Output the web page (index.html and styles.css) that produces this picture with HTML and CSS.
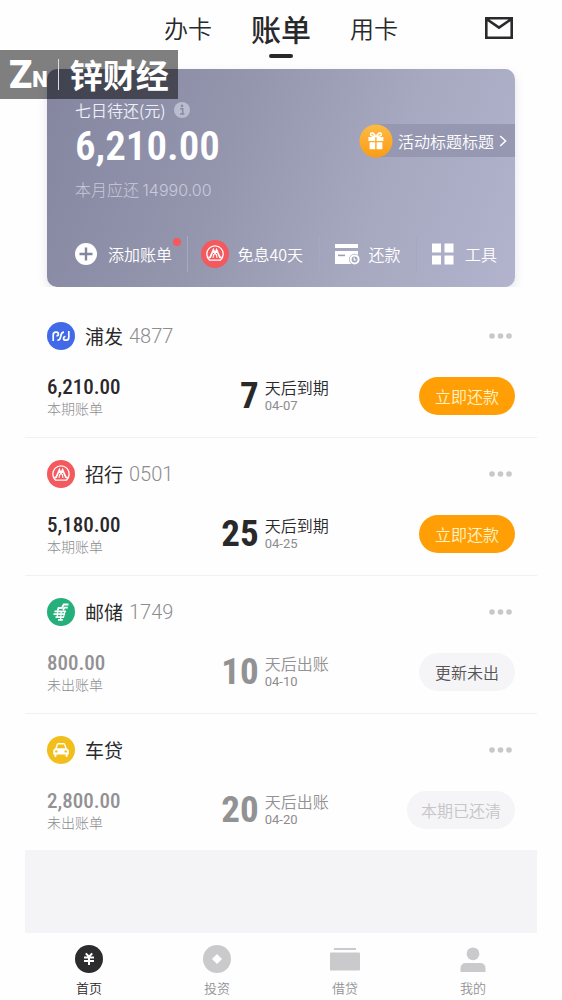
FILE: index.html
```html
<!DOCTYPE html>
<html lang="zh-CN">
<head>
<meta charset="utf-8">
<meta name="viewport" content="width=device-width, initial-scale=1">
<title>账单</title>
<link rel="stylesheet" href="styles.css">
</head>
<body>
<svg class="defs" aria-hidden="true">
  <symbol id="cmb" viewBox="0 0 28 28">
    <circle cx="14" cy="14" r="14" fill="#f4595d"/>
    <path d="M8.6 20.2a8.2 8.2 0 1 1 10.8 0z" fill="none" stroke="#fff" stroke-width="1.3"/>
    <path d="M7.4 17.6l1.8-.4 3.200-7.400 1.600 3.800 1.600-3.800 3.200 7.400 1.800.4" fill="none" stroke="#fff" stroke-width="1.7"/>
    <path d="M12 17.8l.7-3.800M16 17.800l-.7-3.800" fill="none" stroke="#fff" stroke-width="1.1"/>
  </symbol>
  <symbol id="dots" viewBox="0 0 24 6">
    <circle cx="3" cy="3" r="2.8"/><circle cx="11.5" cy="3" r="2.8"/><circle cx="20" cy="3" r="2.8"/>
  </symbol>
</svg>
<div class="watermark"><span class="wm-z">Z</span><span class="wm-n">N</span><span class="wm-line"></span><span class="wm-name">锌财经</span></div>
<div class="app">
  <header class="top">
    <nav class="tabs">
      <a class="tab" href="#cards">办卡</a>
      <a class="tab active" href="#bills">账单</a>
      <a class="tab" href="#use">用卡</a>
    </nav>
    <button class="mail" aria-label="消息">
      <svg width="28" height="22" viewBox="0 0 28 22" fill="none" stroke="#2a2a2c" stroke-width="2.6"><path d="M1.3 1.3h25.4v19.4H1.3zM1.5 2l12.5 8.6L26.5 2"/></svg>
    </button>
  </header>
  <main>
    <section class="card">
      <div class="summary">
        <div>
          <div class="due">七日待还(元)<svg width="16" height="16" viewBox="0 0 16 16"><circle cx="8" cy="8" r="8" fill="#babdce"/><path d="M6.2 6.8h2.5v4.8M6 12h4.4" fill="none" stroke="#888ba4" stroke-width="1.6"/><circle cx="8" cy="3.9" r="1.3" fill="#888ba4"/></svg></div>
          <div class="total">6,210.00</div>
          <div class="month">本月应还 <span>14990.00</span></div>
        </div>
        <a class="promo" href="#promo">
          <svg class="gift" width="34" height="34" viewBox="0 0 34 34"><defs><linearGradient id="g" x1="0" y1="0" x2="0" y2="1"><stop offset="0" stop-color="#fdbb45"/><stop offset="1" stop-color="#fb9c13"/></linearGradient></defs><circle cx="17" cy="17" r="16.5" fill="url(#g)"/><path d="M9.4 13h6.8v4H9.4zM17.6 13h6.8v4h-6.8zM10.6 18.2h5.6v7h-5.6zM17.6 18.2h5.8v7h-5.8z" fill="#fff"/><path d="M16.5 12.5c-4 0-5.4-1.2-4.9-2.6.7-1.8 3.9-.8 4.9 2.6zM17.4 12.5c4 0 5.4-1.2 4.9-2.6-.7-1.8-3.9-.8-4.9 2.6z" fill="none" stroke="#fff" stroke-width="1.5"/></svg>
          <span>活动标题标题</span>
          <svg width="8" height="12" viewBox="0 0 8 12" fill="none" stroke="#fff" stroke-width="1.5"><path d="M1.2 1l5.4 5-5.4 5"/></svg>
        </a>
      </div>
      <div class="tools">
        <button class="tool tool-add"><svg width="22" height="22" viewBox="0 0 22 22"><circle cx="11" cy="11" r="11" fill="#fff"/><path d="M11 4.5v13M4.5 11h13" stroke="#8486a0" stroke-width="2.4"/></svg><span>添加账单</span></button>
        <button class="tool tool-free"><svg width="28" height="28"><use href="#cmb"/></svg><span>免息40天</span></button>
        <button class="tool"><svg width="25" height="21" viewBox="0 0 25 21"><path d="M0 0h23v4H0zM0 7h23v13H0z" fill="#fff"/><path d="M3 11.4h7" stroke="#9c9eb8" stroke-width="1.6"/><circle cx="19.6" cy="15.4" r="5.6" fill="#a3a5be"/><circle cx="19.6" cy="15.4" r="4" fill="none" stroke="#fff" stroke-width="2"/><path d="M19.2 13.6v2.4h2" fill="none" stroke="#fff" stroke-width="1.2"/></svg><span>还款</span></button>
        <button class="tool tool-more"><svg width="22" height="22" viewBox="0 0 22 22" fill="#fff"><path d="M0 .5h9v9H0zM12.5.5h9v9h-9zM0 12.5h9v9H0zM12.5 12.5h9v9h-9z"/></svg><span>工具</span></button>
      </div>
    </section>

    <section class="bills">
      <article class="bill">
        <div class="head">
          <svg width="28" height="28" viewBox="0 0 28 28"><circle cx="14" cy="14" r="14" fill="#4169e8"/><path d="M6.2 19v-6q0-2.800 2.500-2.800h.8q1.900 0 1.900 1.800 0 1.900-1.900 1.900M10.400 18.200q2.300.2 2.900-2.300l.9-3.400q.6-2.300 2.800-2.300M21.800 9v6.200q0 3-2.700 3h-.6q-1.900 0-1.900-1.800 0-1.900 1.900-1.900" fill="none" stroke="#fff" stroke-width="1.7"/></svg>
          <h2>浦发</h2><span class="no">4877</span>
          <button class="more" aria-label="更多"><svg width="24" height="6"><use href="#dots"/></svg></button>
        </div>
        <div class="body">
          <div class="left"><div><div class="amount">6,210.00</div><div class="label">本期账单</div></div><div class="days">7</div></div>
          <div class="right"><div><div class="when">天后到期</div><div class="date">04-07</div></div><button class="btn pay">立即还款</button></div>
        </div>
      </article>
      <article class="bill">
        <div class="head">
          <svg width="28" height="28"><use href="#cmb"/></svg>
          <h2>招行</h2><span class="no">0501</span>
          <button class="more" aria-label="更多"><svg width="24" height="6"><use href="#dots"/></svg></button>
        </div>
        <div class="body">
          <div class="left"><div><div class="amount">5,180.00</div><div class="label">本期账单</div></div><div class="days">25</div></div>
          <div class="right"><div><div class="when">天后到期</div><div class="date">04-25</div></div><button class="btn pay">立即还款</button></div>
        </div>
      </article>
      <article class="bill pending">
        <div class="head">
          <svg width="28" height="28" viewBox="0 0 28 28"><circle cx="14" cy="14" r="14" fill="#25b07b"/><g fill="none" stroke="#fff" stroke-width="1.8"><path d="M21.5 6.5h-4.700l-2 3.500h-3.300l-1 2.800M20.800 9.600h-3.400l-1.300 2.600"/><path d="M7.500 13.300H19M6.500 16.200h11.600M8.500 19.100h8.500M11 21.900h4.800"/><path d="M10.700 13.300l-.5 5.800M17.800 13.300l-1.200 5.800M14.300 13.300l-.8 8.600" stroke-width="1.200"/></g></svg>
          <h2>邮储</h2><span class="no">1749</span>
          <button class="more" aria-label="更多"><svg width="24" height="6"><use href="#dots"/></svg></button>
        </div>
        <div class="body">
          <div class="left"><div><div class="amount">800.00</div><div class="label">未出账单</div></div><div class="days">10</div></div>
          <div class="right"><div><div class="when">天后出账</div><div class="date">04-10</div></div><button class="btn update">更新未出</button></div>
        </div>
      </article>
      <article class="bill pending">
        <div class="head">
          <svg width="28" height="28" viewBox="0 0 28 28"><circle cx="14" cy="14" r="14" fill="#f2be1c"/><path d="M8.2 12.6 9.8 8q.4-1 1.5-1h5.4q1.1 0 1.5 1l1.6 4.6q2 .4 2 2.4v3.4h-1.2V20q0 1-1 1t-1-1v-1.6H9.4V20q0 1-1 1t-1-1v-1.6H6.2V15q0-2 2-2.4z" fill="#fff"/><path d="M9.8 12.3 11 8.6h6l1.2 3.7z" fill="#f2be1c"/><circle cx="9.3" cy="15.4" r="1.2" fill="#f2be1c"/><circle cx="18.7" cy="15.4" r="1.2" fill="#f2be1c"/></svg>
          <h2>车贷</h2>
          <button class="more" aria-label="更多"><svg width="24" height="6"><use href="#dots"/></svg></button>
        </div>
        <div class="body">
          <div class="left"><div><div class="amount">2,800.00</div><div class="label">未出账单</div></div><div class="days">20</div></div>
          <div class="right"><div><div class="when">天后出账</div><div class="date">04-20</div></div><button class="btn done" disabled>本期已还清</button></div>
        </div>
      </article>
    </section>
  </main>
  <nav class="bottom">
    <a class="current" href="#home"><svg width="28" height="28" viewBox="0 0 28 28"><circle cx="14" cy="14" r="14" fill="#2c2b2d"/><path d="M10.8 8.4l3.2 3.4 3.2-3.4M9 12.6h10M9 16h10M14 12v8" fill="none" stroke="#fff" stroke-width="2"/></svg>首页</a>
    <a href="#invest"><svg width="28" height="28" viewBox="0 0 28 28"><circle cx="14" cy="14" r="14" fill="#cac9cb"/><path d="M14 9l5 5-5 5-5-5z" fill="#fff"/></svg>投资</a>
    <a href="#loan"><svg width="30" height="28" viewBox="0 0 30 28" fill="#cac9cb"><path d="M4 3h22v2H4z"/><rect y="7.5" width="30" height="18" rx="1"/></svg>借贷</a>
    <a href="#me"><svg width="26" height="28" viewBox="0 0 26 28" fill="#cac9cb"><circle cx="13" cy="8.8" r="6.4"/><path d="M.5 27v-3.5q0-5.500 5.500-5.500h14q5.500 0 5.500 5.500V27z"/></svg>我的</a>
  </nav>
</div>
</body>
</html>
```
FILE: styles.css
```css
* { box-sizing: border-box; }
body {
  margin: 0;
  background: #fefefe;
  color: #29282a;
  font-family: "Noto Sans CJK SC", sans-serif;
  font-size: 16px;
  font-weight: 350;
  line-height: 20px;
}
button {
  padding: 0;
  border: 0;
  background: none;
  color: inherit;
  font: inherit;
}
a { color: inherit; text-decoration: none; }
svg { display: block; flex: none; }
.defs { position: absolute; width: 0; height: 0; }

.app {
  display: flex;
  flex-direction: column;
  min-height: 100vh;
  margin: 0 25px;
}
main {
  flex: 1;
  background: linear-gradient(#fefefe, #fefefe) top / 100% 300px no-repeat, #f4f3f5;
}

.top {
  display: grid;
  grid-template-columns: 1fr auto 1fr;
  padding: 8px 24px 11px;
}
.tabs {
  display: flex;
  grid-column: 2;
  gap: 39px;
}
.tab {
  font-size: 24px;
  line-height: 40px;
}
.tab.active {
  display: flex;
  flex-direction: column;
  align-items: center;
  gap: 6px;
  font-size: 30px;
  font-weight: 500;
}
.tab.active::after {
  content: "";
  width: 24px;
  height: 4px;
  border-radius: 2px;
  background: #29282a;
}
.mail {
  align-self: start;
  justify-self: end;
  padding-top: 9px;
}

.watermark {
  position: absolute;
  z-index: 2;
  top: 50px;
  left: 0;
  display: flex;
  align-items: center;
  height: 49px;
  padding: 0 9px;
  background: rgba(0, 0, 0, 0.5);
  color: #fff;
  font-weight: 900;
}
.wm-z, .wm-n { font-family: Roboto, sans-serif; }
.wm-z { font-size: 38px; line-height: 40px; }
.wm-n { font-size: 22px; line-height: 24px; padding-top: 10px; }
.wm-line {
  width: 1px;
  height: 31px;
  margin: 0 11px 0 10px;
  background: #ddd;
}
.wm-name { font-size: 33px; line-height: 44px; padding-bottom: 2px; font-weight: 700; }

.card {
  display: flex;
  flex-direction: column;
  gap: 29px;
  margin: 0 22px;
  padding: 31px 0 10px;
  border-radius: 10px;
  background: linear-gradient(110deg, #8486a0 0%, #9496ae 38%, #a6a9c0 70%, #b2b3cd 100%);
  box-shadow: 0 4px 10px rgba(90, 90, 140, 0.16);
  color: #fff;
}
.summary {
  display: flex;
  justify-content: space-between;
  align-items: flex-start;
  padding-left: 28px;
}
.due {
  display: flex;
  align-items: center;
  gap: 8px;
  color: #eeeff6;
}
.total {
  padding: 2px 0 7px;
  font: 600 41px/48px "Roboto Condensed", Roboto, sans-serif;
}
.month { line-height: 24px; font-weight: 300; color: #c9cadb; }
.month span { font-family: Inter, sans-serif; }
.promo {
  display: flex;
  align-items: center;
  gap: 5px;
  height: 33px;
  margin-top: 24px;
  padding-right: 8px;
  background: linear-gradient(90deg, transparent 16px, #9698b2 16px);
}
.tools {
  display: flex;
  justify-content: space-between;
  align-items: center;
  padding: 0 18px 0 28px;
  height: 46px;
}
.tool {
  position: relative;
  display: flex;
  align-items: center;
  gap: 9px;
  height: 36px;
}
.tool + .tool { border-left: 1px solid #a6a8bf; padding-left: 15px; }
.tool + .tool-free { padding-left: 13px; }
.tool-free { gap: 8px; }
.tool-add, .tool-more { gap: 11px; }
.tool-add::after {
  content: "";
  position: absolute;
  top: 2px;
  right: -9px;
  width: 8px;
  height: 8px;
  border-radius: 50%;
  background: #f4595d;
}

.bills { padding-top: 13px; background: #fefefe; }
.bill {
  display: flex;
  flex-direction: column;
  gap: 25px;
  height: 138px;
  padding: 22px 22px 0;
  border-bottom: 1px solid #f1f0f2;
}
.bill:last-child { height: 136px; border-bottom: 0; }
.head { display: flex; align-items: center; height: 28px; }
h2 {
  margin: 0 6px 0 10px;
  font-size: 19px;
  line-height: 28px;
  font-weight: 400;
}
.no { font: 300 20px/28px Roboto, sans-serif; color: #8d8c8e; }
.more { margin-left: auto; padding: 8px 2px; fill: #c8c7c9; }
.body {
  display: grid;
  grid-template-columns: 11fr 13fr;
  gap: 6px;
  align-items: center;
}
.left, .right {
  display: flex;
  justify-content: space-between;
  align-items: center;
}
.amount, .days { font-family: "Roboto Condensed", Roboto, sans-serif; }
.amount { font-size: 21px; line-height: 24px; font-weight: 500; }
.label { font-size: 14px; line-height: 18px; color: #8d8c8e; font-weight: 300; }
.days { font-size: 37px; line-height: 40px; font-weight: 700; }
.when { line-height: 20px; }
.date { font: 400 13px/18px Roboto, sans-serif; color: #8d8c8e; }
.pending .amount, .pending .days, .pending .when { color: #929193; }
.btn {
  min-width: 96px;
  height: 38px;
  padding: 0 14px;
  border-radius: 19px;
}
.pay { background: #ff9f05; color: #fff3c8; }
.update { background: #f5f4f6; color: #555456; }
.done { background: #f5f4f6; color: #c6c5c7; }

.bottom {
  display: grid;
  grid-template-columns: repeat(4, 1fr);
  height: 67px;
  padding-top: 12px;
  background: #fefefe;
}
.bottom a {
  display: flex;
  flex-direction: column;
  align-items: center;
  gap: 5px;
  color: #929193;
  font-size: 13px;
  line-height: 20px;
}
.bottom .current { color: #29282a; }
```
